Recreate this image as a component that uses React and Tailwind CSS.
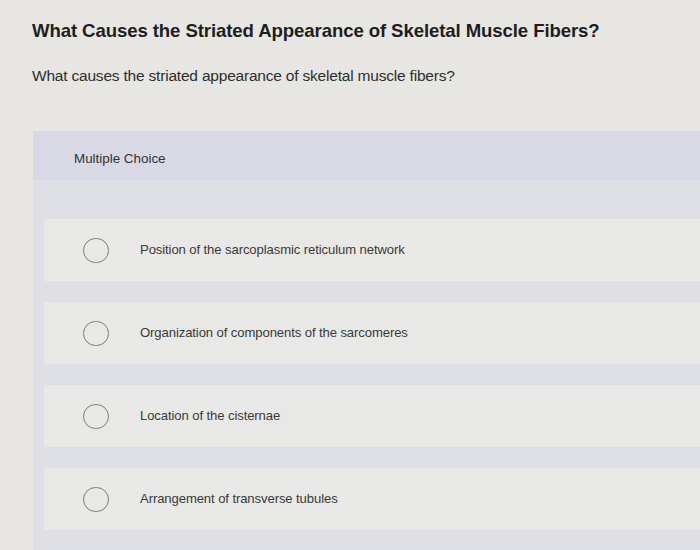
export default function App() {
  const options = [
    "Position of the sarcoplasmic reticulum network",
    "Organization of components of the sarcomeres",
    "Location of the cisternae",
    "Arrangement of transverse tubules",
  ];
  return (
    <div className="w-[700px] h-[550px] overflow-hidden bg-[#e7e6e2] text-[#2a2a2a]" style={{ fontFamily: '"Liberation Sans", Arial, sans-serif' }}>
      <div className="pl-[32px] pt-[19px]">
        <h1 className="text-[18.6px] font-bold leading-[24px] text-[#1e1e1e] tracking-[-0.1px]">What Causes the Striated Appearance of Skeletal Muscle Fibers?</h1>
        <p className="mt-[24px] text-[15.5px] leading-[18px] text-[#2e2e2e] tracking-[-0.2px]">What causes the striated appearance of skeletal muscle fibers?</p>
      </div>
      <div className="ml-[33px] mt-[46px] bg-[#dfdfe6] pb-[40px]">
        <div className="h-[49px] bg-[#d8d9e5] pl-[41px] pt-[18px] text-[13.4px] text-[#333]">Multiple Choice</div>
        <div className="pl-[11px] pt-[39px] flex flex-col gap-[21px]">
          {options.map((o) => (
            <div key={o} className="h-[62px] bg-[#e8e8e6] flex items-center">
              <div className="ml-[39px] w-[26px] h-[25px] rounded-full border-[1.5px] border-[#7a7a7a] shrink-0" />
              <span className="ml-[31px] text-[13.1px] text-[#3a3a3a] tracking-[-0.1px]">{o}</span>
            </div>
          ))}
        </div>
      </div>
    </div>
  );
}
